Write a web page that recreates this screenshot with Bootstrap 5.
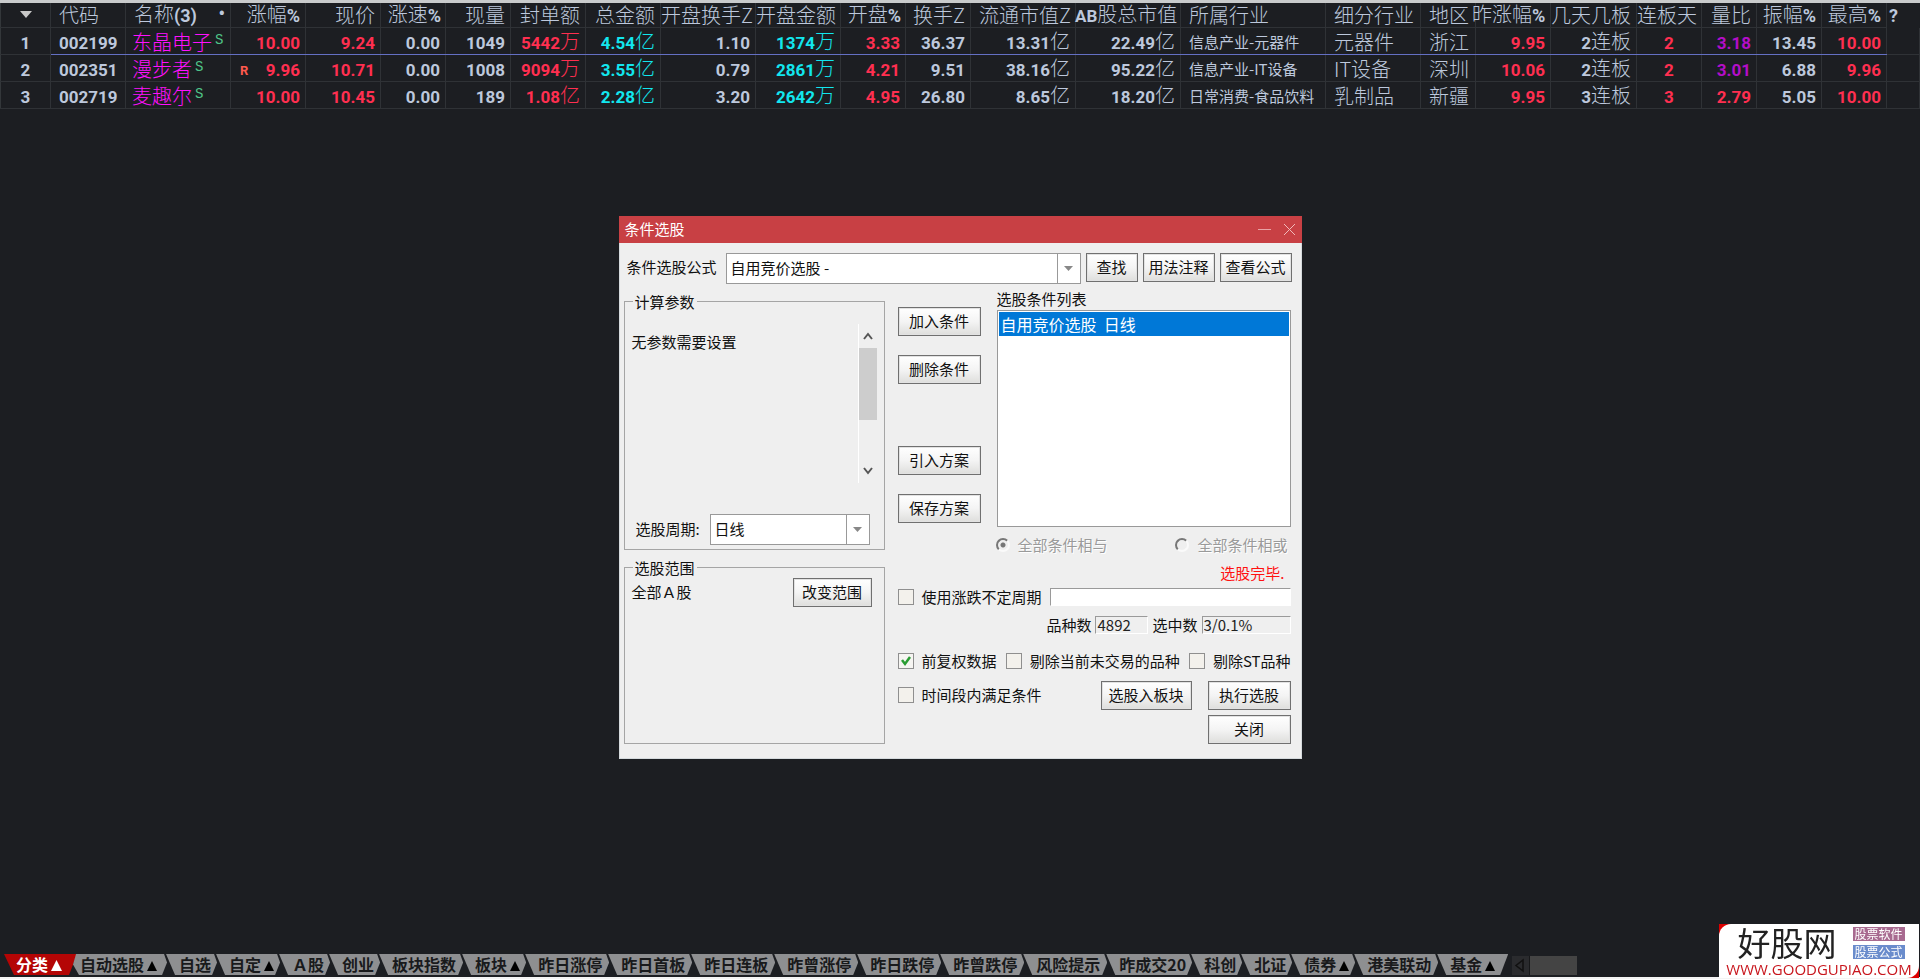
<!DOCTYPE html>
<html lang="zh-CN">
<head>
<meta charset="utf-8">
<meta name="viewport" content="width=device-width, initial-scale=1">
<title>条件选股</title>
<link href="https://cdn.jsdelivr.net/npm/bootstrap@5.3.0/dist/css/bootstrap.min.css" rel="stylesheet">
<style>
  body { background: #1c1e22; color: #bdc8dc; font-family: "Noto Sans CJK SC", sans-serif; font-size: 15px; line-height: 20px; }

  /* quote grid */
  .quotes { table-layout: fixed; border-top: 3px solid #c9cbcc; border-left: 1px solid #33373a; }
  .quotes th, .quotes td { height: 27px; padding: 0 5px; border: 0 solid #2f3236; border-width: 0 1px 1px 0; white-space: nowrap; text-align: right; font-size: 20px; line-height: 22px; font-weight: 300; }
  .quotes td { padding-top: 1px; }
  .quotes th { height: 26px; }
  .quotes b { font: 700 17px/22px Roboto, sans-serif; }
  .quotes th b { font-size: 18px; }
  .quotes .to-left { text-align: left; padding-left: 8px; }
  .quotes .nm { text-align: left; padding-left: 6px; }
  .quotes .mid { text-align: center; }
  .quotes .trade { font-size: 15px; font-weight: 400; text-align: left; padding-left: 8px; }
  .quotes .past { border: 0; text-align: left; padding-left: 2px; }
  .quotes .tight { padding-left: 0; text-indent: -4px; }
  .quotes .total-cap { padding-left: 0; text-indent: -1px; }
  .quotes .total-cap b { font-size: 17px; }
  .quotes .picked td:not(:first-child):not(:last-child) { border-bottom-color: #6470c4; }
  .quotes sup { font: 14px/14px "Liberation Mono", monospace; color: #4fc488; top: -6px; margin-left: 3px; }
  .rmark { font: 700 13px/28px Roboto, sans-serif; color: #ff5a4e; padding-left: 4px; height: 22px; }
  .up { color: #ff2f50; }
  .cy { color: #12e6ee; }
  .pu { color: #ff10ff; }
  .vi { color: #b40ec8; }

  /* dialog */
  .stage { pointer-events: none; padding-bottom: 5px; }
  .dlg { width: 683px; background: #efefef; color: #111; border: 1px solid #d5dadd; border-top: 0; pointer-events: auto; }
  .dlg-head { height: 27px; background: #c84044; color: #fff; padding: 0 6px; margin: 0 -1px; }
  .dlg-head h1 { font-size: 15px; line-height: 26px; font-weight: 400; }
  .dlg-head button { background: none; border: 0; padding: 0; line-height: 0; }
  .dlg-body { padding: 10px 9px 14px 4px; }
  .find { gap: 5px; padding-left: 3px; }
  .push { height: 29px; padding: 0; border: 1px solid #707070; border-radius: 0; background: linear-gradient(#fff, #f4f4f4 50%, #dededc); color: #111; font-size: 15px; line-height: 24px; outline: 1px solid #e2e2e2; outline-offset: -2px; flex: none; }
  .w-s { width: 52px; } .w-m { width: 72px; } .w-l { width: 83px; } .w-x { width: 91px; } .w-c { width: 79px; }
  .drop { appearance: none; height: 31px; border: 1px solid #999; border-radius: 0; padding: 0 26px 0 4px; color: #111; font-size: 15px; min-width: 0;
    background: #fff url("data:image/svg+xml,%3Csvg xmlns='http://www.w3.org/2000/svg' width='23' height='31'%3E%3Cpath d='M.5 0v31' stroke='%23999'/%3E%3Cpath d='M7 13h9l-4.500 5z' fill='%23888'/%3E%3C/svg%3E") no-repeat right center; }
  .side { width: 261px; flex: none; }
  .work { margin-left: 13px; padding-right: 1px; }
  .box { border: 1px solid #a5a5a5; padding: 0 12px 0 7px; margin: 0; }
  .box legend { float: none; width: auto; font-size: 15px; line-height: 20px; margin: 0 0 0 1px; padding: 0 2px; }
  .box-a { height: 258px; padding-right: 6px; }
  .box-b { height: 186px; }
  .params { height: 159px; margin-top: 12px; }
  .sbar { width: 20px; border-left: 1px solid #fff; padding: 8px 0; }
  .sthumb { width: 18px; height: 72px; background: #cdcdcd; }
  .ops { padding-top: 15px; gap: 19px; }
  .conds { height: 217px; border: 1px solid #999; background: #fff; padding: 1px; }
  .conds li { background: #0078d7; color: #fff; font-size: 16px; line-height: 24px; padding: 0 2px; white-space: pre; }
  .cap { height: 18px; line-height: 13px; }
  .join { padding: 0 3px 0 98px; }
  .tick { appearance: none; width: 16px; height: 16px; border: 1px solid #8f8f8f; background: #f3f1ec; margin: 0; flex: none; }
  .tick:checked { background: #f6f5f2 url("data:image/svg+xml,%3Csvg xmlns='http://www.w3.org/2000/svg' width='14' height='14'%3E%3Cpath d='M3 6l3 4 5-7' fill='none' stroke='%232a9d33' stroke-width='2.500'/%3E%3C/svg%3E") no-repeat center; }
  .dot { appearance: none; width: 14px; height: 14px; border: 2px solid; border-color: #777 #fafafa #fafafa #777; border-radius: 50%; margin: 0; flex: none; }
  .dot:checked { background: radial-gradient(#777 2px, transparent 3px); }
  .off { color: #9a9a9a; text-shadow: 1px 1px #fff; }
  .line { height: 20px; white-space: nowrap; }
  .field { height: 18px; border: 1px solid; border-color: #9a9a9a #fff #fff #9a9a9a; background: #fff; padding: 0 1px; font-size: 15px; min-width: 0; color: #222; }
  .field[readonly] { background: #efefef; }
  .w-n { width: 53px; } .w-r { width: 89px; }
  .red { color: #f11; padding-right: 6px; }
  .acts { margin-top: 10px; }
  .last { margin-top: 5px; }

  /* category tabs */
  .tabs { padding-left: 4px; border-bottom: 2px solid #f4f4f4; height: 25px; }
  .tabs .cat { height: 21px; flex: none; border: 0; background: #8e8f91; color: #191a1c; font-size: 16px; font-weight: 700; line-height: 21px; padding: 0 6px 0 14px; margin-right: -2px; clip-path: polygon(1px 0, calc(100% - 3px) 0, 100% 40%, calc(100% - 5px) 100%, 10px 100%); }
  .tabs .four { padding-right: 7px; }
  .tabs .cat:first-child { background: #b40505; color: #fff; padding: 0 15px 0 12px; clip-path: polygon(0 0, 100% 0, calc(100% - 8px) 100%, 10px 100%); margin-right: -5px; }
  .tabs .cat:nth-child(2) { clip-path: polygon(4px 0, calc(100% - 3px) 0, 100% 40%, calc(100% - 5px) 100%, 7px 100%, 1px 50%); padding: 0 10px 0 8px; }
  .tabs .cat:last-of-type { clip-path: polygon(1px 0, 100% 0, calc(100% - 8px) 100%, 10px 100%); padding-right: 13px; }
  .cat svg { margin-left: 3px; vertical-align: 0; }
  .hbar { width: 65px; height: 19px; background: #444; margin: 2px 0 0 6px; }
  .hbar svg { background: #2a2b2e; border-right: 1px solid #17181a; }

  /* site mark */
  .site { width: 200px; height: 54px; background: #fff; border-radius: 12px 0 12px 0; color: #222; }
  .site-bg { right: 1px; bottom: 1px; background: #d00; }
  .site-name { font-size: 33px; line-height: 37px; }
  .site-tag { font-size: 12px; line-height: 14px; color: #fff; width: 52px; text-align: center; }
  .site-url { font: 15px/16px "Open Sans", sans-serif; color: #c8161d; text-decoration: none; }
</style>
</head>
<body>
<div class="d-flex flex-column vh-100 overflow-hidden">
  <table class="quotes w-100">
    <colgroup>
      <col style="width:50px"><col style="width:75px"><col style="width:105px"><col style="width:75px"><col style="width:75px"><col style="width:65px"><col style="width:65px"><col style="width:75px"><col style="width:75px"><col style="width:95px"><col style="width:85px"><col style="width:65px"><col style="width:65px"><col style="width:105px"><col style="width:105px"><col style="width:145px"><col style="width:95px"><col style="width:55px"><col style="width:75px"><col style="width:86px"><col style="width:65px"><col style="width:55px"><col style="width:65px"><col style="width:65px"><col>
    </colgroup>
    <thead>
      <tr>
        <th class="mid"><svg class="d-block mx-auto" width="12" height="8"><path d="M0 0h12l-6 7z" fill="#c8c8c8"/></svg></th>
        <th class="to-left">代码</th>
        <th class="to-left"><span class="d-flex justify-content-between"><span>名称<b>(3)</b></span><b>•</b></span></th>
        <th class="ps-0">涨幅<b>%</b></th><th>现价</th><th class="px-0 pe-1">涨速<b>%</b></th><th>现量</th><th>封单额</th><th>总金额</th><th class="px-0 pe-1">开盘换手Z</th><th class="px-0 pe-1">开盘金额</th><th class="px-0 pe-1">开盘<b>%</b></th><th>换手Z</th><th class="px-0 pe-1">流通市值Z</th><th class="total-cap"><b>AB</b>股总市值</th>
        <th class="to-left">所属行业</th><th class="to-left">细分行业</th><th class="to-left">地区</th>
        <th class="tight">昨涨幅<b>%</b></th><th class="ps-0">几天几板</th><th class="ps-0">连板天</th><th>量比</th><th class="ps-0">振幅<b>%</b></th><th class="ps-0">最高<b>%</b></th><th class="past"><b>?</b></th>
      </tr>
    </thead>
    <tbody>
      <tr class="picked">
        <td class="mid"><b>1</b></td><td class="to-left"><b>002199</b></td><td class="nm pu">东晶电子<sup>S</sup></td>
        <td class="up"><b>10.00</b></td><td class="up"><b>9.24</b></td><td><b>0.00</b></td><td><b>1049</b></td><td class="up"><b>5442</b>万</td><td class="cy"><b>4.54</b>亿</td><td><b>1.10</b></td><td class="cy"><b>1374</b>万</td><td class="up"><b>3.33</b></td><td><b>36.37</b></td><td><b>13.31</b>亿</td><td><b>22.49</b>亿</td>
        <td class="trade">信息产业-元器件</td><td class="to-left">元器件</td><td class="to-left">浙江</td>
        <td class="up"><b>9.95</b></td><td><b>2</b>连板</td><td class="up mid"><b>2</b></td><td class="vi"><b>3.18</b></td><td><b>13.45</b></td><td class="up"><b>10.00</b></td><td></td>
      </tr>
      <tr>
        <td class="mid"><b>2</b></td><td class="to-left"><b>002351</b></td><td class="nm pu">漫步者<sup>S</sup></td>
        <td class="up"><span class="rmark float-start">R</span><b>9.96</b></td><td class="up"><b>10.71</b></td><td><b>0.00</b></td><td><b>1008</b></td><td class="up"><b>9094</b>万</td><td class="cy"><b>3.55</b>亿</td><td><b>0.79</b></td><td class="cy"><b>2861</b>万</td><td class="up"><b>4.21</b></td><td><b>9.51</b></td><td><b>38.16</b>亿</td><td><b>95.22</b>亿</td>
        <td class="trade">信息产业-IT设备</td><td class="to-left">IT设备</td><td class="to-left">深圳</td>
        <td class="up"><b>10.06</b></td><td><b>2</b>连板</td><td class="up mid"><b>2</b></td><td class="vi"><b>3.01</b></td><td><b>6.88</b></td><td class="up"><b>9.96</b></td><td></td>
      </tr>
      <tr>
        <td class="mid"><b>3</b></td><td class="to-left"><b>002719</b></td><td class="nm pu">麦趣尔<sup>S</sup></td>
        <td class="up"><b>10.00</b></td><td class="up"><b>10.45</b></td><td><b>0.00</b></td><td><b>189</b></td><td class="up"><b>1.08</b>亿</td><td class="cy"><b>2.28</b>亿</td><td><b>3.20</b></td><td class="cy"><b>2642</b>万</td><td class="up"><b>4.95</b></td><td><b>26.80</b></td><td><b>8.65</b>亿</td><td><b>18.20</b>亿</td>
        <td class="trade">日常消费-食品饮料</td><td class="to-left">乳制品</td><td class="to-left">新疆</td>
        <td class="up"><b>9.95</b></td><td><b>3</b>连板</td><td class="up mid"><b>3</b></td><td class="up"><b>2.79</b></td><td><b>5.05</b></td><td class="up"><b>10.00</b></td><td></td>
      </tr>
    </tbody>
  </table>

  <nav class="tabs d-flex mt-auto">
    <button class="cat">分类<svg width="11" height="11"><path d="M5.500 0L11 11H0z" fill="#fff"/></svg></button>
    <button class="cat">自动选股<svg width="10" height="10"><path d="M5 0l5 10H0z"/></svg></button>
    <button class="cat">自选</button>
    <button class="cat">自定<svg width="10" height="10"><path d="M5 0l5 10H0z"/></svg></button>
    <button class="cat">Ａ股</button>
    <button class="cat">创业</button>
    <button class="cat four">板块指数</button>
    <button class="cat">板块<svg width="10" height="10"><path d="M5 0l5 10H0z"/></svg></button>
    <button class="cat four">昨日涨停</button>
    <button class="cat four">昨日首板</button>
    <button class="cat four">昨日连板</button>
    <button class="cat four">昨曾涨停</button>
    <button class="cat four">昨日跌停</button>
    <button class="cat four">昨曾跌停</button>
    <button class="cat four">风险提示</button>
    <button class="cat">昨成交20</button>
    <button class="cat">科创</button>
    <button class="cat">北证</button>
    <button class="cat">债券<svg width="10" height="10"><path d="M5 0l5 10H0z"/></svg></button>
    <button class="cat four">港美联动</button>
    <button class="cat">基金<svg width="10" height="10"><path d="M5 0l5 10H0z"/></svg></button>
    <div class="hbar d-flex"><svg width="18" height="19"><path d="M11 4v11L4 9.500z" fill="none" stroke="#111" stroke-width="1.500"/></svg></div>
  </nav>
</div>

<div class="site-bg position-fixed">
  <div class="site d-flex flex-column align-items-center">
    <div class="d-flex align-items-center gap-3 ps-1">
      <span class="site-name">好股网</span>
      <span class="d-flex flex-column gap-1"><span class="site-tag" style="background:#a86a90">股票软件</span><span class="site-tag" style="background:#6a8ccc">股票公式</span></span>
    </div>
    <a class="site-url" href="#">WWW.GOODGUPIAO.COM</a>
  </div>
</div>

<div class="stage position-fixed top-0 start-0 w-100 h-100 d-flex align-items-center justify-content-center">
  <section class="dlg">
    <header class="dlg-head d-flex align-items-center">
      <h1 class="m-0 me-auto">条件选股</h1>
      <button aria-label="最小化"><svg width="13" height="13"><path d="M0 6.500h13" stroke="#e9a3a5"/></svg></button>
      <button class="ms-2 ps-1" aria-label="关闭窗口"><svg width="13" height="13"><path d="M1 1l11 11M12 1L1 12" stroke="#f0b9ba"/></svg></button>
    </header>
    <div class="dlg-body">
      <div class="find d-flex">
        <label for="formula" class="pt-1 pe-1 text-nowrap">条件选股公式</label>
        <select id="formula" class="drop flex-grow-1"><option>自用竞价选股 -</option></select>
        <button class="push w-s">查找</button>
        <button class="push w-m">用法注释</button>
        <button class="push w-m">查看公式</button>
      </div>
      <div class="d-flex pt-2">
        <div class="side">
          <fieldset class="box box-a d-flex flex-column">
            <legend>计算参数</legend>
            <div class="params d-flex justify-content-between">
              <p class="m-0 pt-2">无参数需要设置</p>
              <div class="sbar d-flex flex-column align-items-center">
                <svg width="10" height="8"><path d="M1 7l4-5 4 5" fill="none" stroke="#555" stroke-width="2"/></svg>
                <span class="sthumb mt-2 mb-auto"></span>
                <svg width="10" height="8"><path d="M1 1l4 5 4-5" fill="none" stroke="#555" stroke-width="2"/></svg>
              </div>
            </div>
            <div class="d-flex align-items-center mt-auto mb-1 ps-1 pe-2">
              <label for="period" class="pe-2 me-auto">选股周期:</label>
              <select id="period" class="drop" style="width:160px"><option>日线</option></select>
            </div>
          </fieldset>
          <fieldset class="box box-b mt-2">
            <legend>选股范围</legend>
            <div class="d-flex justify-content-between">
              <span class="pt-1">全部Ａ股</span><button class="push w-c">改变范围</button>
            </div>
          </fieldset>
        </div>
        <div class="work flex-grow-1">
          <div class="d-flex">
            <div class="ops d-flex flex-column">
              <button class="push w-l">加入条件</button>
              <button class="push w-l">删除条件</button>
              <button class="push w-l mt-auto">引入方案</button>
              <button class="push w-l mb-1">保存方案</button>
            </div>
            <div class="flex-grow-1 ms-3">
              <div class="cap">选股条件列表</div>
              <ul class="conds list-unstyled m-0"><li>自用竞价选股  日线</li></ul>
            </div>
          </div>
          <div class="line off join d-flex justify-content-between mt-2">
            <label class="d-flex align-items-center gap-2"><input class="dot" type="radio" name="join" checked disabled>全部条件相与</label>
            <label class="d-flex align-items-center gap-2"><input class="dot" type="radio" name="join" disabled>全部条件相或</label>
          </div>
          <div class="line red text-end mt-2">选股完毕.</div>
          <div class="line d-flex align-items-center mt-1">
            <label class="d-flex align-items-center gap-2"><input class="tick" type="checkbox">使用涨跌不定周期</label>
            <input class="field flex-grow-1 ms-2" aria-label="周期">
          </div>
          <div class="line d-flex align-items-center justify-content-end mt-2">
            <label for="total" class="pe-1">品种数</label><input id="total" class="field w-n" value="4892" readonly>
            <label for="hits" class="ps-1 pe-1">选中数</label><input id="hits" class="field w-r" value="3/0.1%" readonly>
          </div>
          <div class="line d-flex align-items-center justify-content-between mt-3">
            <label class="d-flex align-items-center gap-2"><input class="tick" type="checkbox" checked>前复权数据</label>
            <label class="d-flex align-items-center gap-2"><input class="tick" type="checkbox">剔除当前未交易的品种</label>
            <label class="d-flex align-items-center gap-2"><input class="tick" type="checkbox">剔除ST品种</label>
          </div>
          <div class="acts d-flex align-items-center">
            <label class="d-flex align-items-center gap-2 me-auto"><input class="tick" type="checkbox">时间段内满足条件</label>
            <button class="push w-x me-3">选股入板块</button><button class="push w-l">执行选股</button>
          </div>
          <div class="last d-flex justify-content-end"><button class="push w-l">关闭</button></div>
        </div>
      </div>
    </div>
  </section>
</div>
<script src="https://cdn.jsdelivr.net/npm/bootstrap@5.3.0/dist/js/bootstrap.bundle.min.js"></script>
</body>
</html>
